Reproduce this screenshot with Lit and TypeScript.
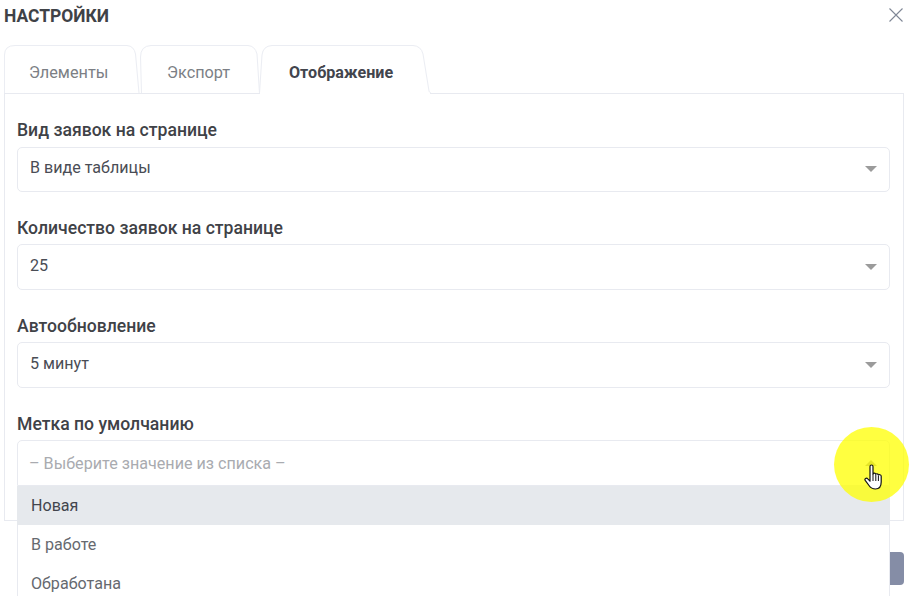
import { LitElement, html, css, svg } from "lit";
import { customElement } from "lit/decorators.js";

const TAB_PATHS = [
  "M0.5 48 V10 Q0.5 0.5 11 0.5 H123 Q130 1 131.5 9 L135 48",
  "M137.5 48 L136.5 12 Q136.5 1 147 0.5 H244 Q251 1 253 9 L255.5 48",
];
const ACTIVE_TAB_PATH = "M255.5 48 L258 10 Q259 1 268 0.5 H409 Q417 1 419 9 L425 46 Q425.3 48 427 48";

@customElement("app-root")
export class AppRoot extends LitElement {
  static styles = css`
    :host { display: block; width: 911px; height: 596px; overflow: hidden; position: relative; background: #fff;
      font-family: Roboto, sans-serif; color: #42454d; }
    .head { display: flex; justify-content: space-between; align-items: center; height: 31px; padding: 0 7px 0 4px; }
    .title { font-size: 17.45px; font-weight: 700; text-transform: uppercase; color: #3f4247; }
    .close { width: 16px; height: 16px; display: block; margin-top: -2px; }
    .tabs { position: relative; display: flex; margin: 14px 0 0 4px; height: 48px; z-index: 2; }
    .shape { position: absolute; left: 0; top: 0; overflow: visible; }
    .tab { position: relative; display: flex; align-items: center; font-size: 16.3px; color: #7c7f85; height: 48px; padding-top: 7px; box-sizing: border-box; }
    .tab.on { color: #42454d; font-weight: 700; font-size: 16.1px; }
    .panel { position: relative; margin: 0 7px 0 4px; height: 428px; border: 1px solid #e8eaf0; box-sizing: border-box; padding: 25px 13px 0 12px; display: flex; flex-direction: column; gap: 25px; background: #fff; }
    .field { display: flex; flex-direction: column; gap: 5px; }
    .field.first { gap: 6px; }
    .label { font-size: 17.6px; font-weight: 500; line-height: 22px; color: #3f4247; height: 22px; }
    .sel { height: 46px; box-sizing: border-box; border: 1px solid #e8eaf0; border-radius: 5px; padding: 0 12px 4px; display: flex; align-items: center; justify-content: space-between; font-size: 16.1px; color: #4a4d55; background: #fff; }
    .first .sel { height: 45px; }
    .sel.ph { color: #a9abb0; border-radius: 5px 5px 0 0; padding-bottom: 0; font-size: 16.15px; }
    .sel.ph span { margin-left: -1px; }
    .arrow { width: 0; height: 0; border-left: 6px solid transparent; border-right: 6px solid transparent; border-top: 6px solid #9b9b9b; margin-top: 3px; }
    .arrow.up { border-top: 0; border-bottom: 6px solid #9b9b9b; margin-top: 0; }
    .foot { display: flex; justify-content: flex-end; margin: 31px 7px 0 0; }
    .btn { width: 40px; height: 33px; background: #858da6; border-radius: 4px; }
    .drop { position: absolute; left: 17px; top: 486px; width: 873px; box-sizing: border-box; background: #fff; border: 1px solid #e8eaf0; border-top: 0; z-index: 5; height: 140px; }
    .opt { height: 39px; display: flex; align-items: center; padding: 0 13px; font-size: 16.1px; color: #66696f; }
    .opt.on { background: #e6e9ed; color: #42454d; margin: 0 -1px; padding: 0 14px; }
    .spot { position: absolute; left: 834px; top: 427px; width: 75px; height: 75px; border-radius: 50%; background: rgba(255, 255, 0, .75); z-index: 6; }
    .cursor { position: absolute; left: 864px; top: 464px; z-index: 7; width: 20px; height: 26px; }
  `;

  private field(label: string, value: string, first = false) {
    return html`<div class="field ${first ? "first" : ""}">
      <div class="label">${label}</div>
      <div class="sel"><span>${value}</span><i class="arrow"></i></div>
    </div>`;
  }

  render() {
    return html`
      <div class="head">
        <div class="title">Настройки</div>
        <svg class="close" viewBox="0 0 16 16"><path d="M1.5 1.5 L14.5 14.5 M14.5 1.5 L1.5 14.5" stroke="#7f8796" stroke-width="1.1" fill="none"/></svg>
      </div>
      <div class="tabs">
        <svg class="shape" width="430" height="49" viewBox="0 0 430 49">
          ${TAB_PATHS.map((d) => svg`<path d=${d} fill="#fff" stroke="#ebedf3"/>`)}
          ${svg`<path d=${ACTIVE_TAB_PATH} fill="#fff" stroke="#ebedf3"/>`}
          ${svg`<rect x="256" y="47.5" width="170" height="2" fill="#fff"/>`}
        </svg>
        <div class="tab" style="padding-left:25px;width:136px">Элементы</div>
        <div class="tab" style="padding-left:27px;width:122px">Экспорт</div>
        <div class="tab on" style="padding-left:27px">Отображение</div>
      </div>
      <div class="panel">
        ${this.field("Вид заявок на странице", "В виде таблицы", true)}
        ${this.field("Количество заявок на странице", "25")}
        ${this.field("Автообновление", "5 минут")}
        <div class="field">
          <div class="label">Метка по умолчанию</div>
          <div class="sel ph"><span>– Выберите значение из списка –</span><i class="arrow up"></i></div>
        </div>
      </div>
      <div class="foot"><div class="btn"></div></div>
      <div class="drop">
        <div class="opt on">Новая</div>
        <div class="opt">В работе</div>
        <div class="opt">Обработана</div>
      </div>
      <div class="spot"></div>
      <svg class="cursor" viewBox="0 0 20 26">
        <path d="M6 2.5 C6 0.5 9 0.5 9 2.5 V10 C9.5 8.8 11.5 8.8 11.8 10.4 C12.2 9.4 14.2 9.6 14.4 11 C15 10.2 17.2 10.6 17.2 12.2 V18 C17.2 22.5 15.5 25 11.5 25 C8 25 6.6 23.8 5 21.5 L1.2 16.4 C0.2 14.8 2.4 13.2 3.8 14.8 L6 17.2 Z" fill="#fff" stroke="#111" stroke-width="1.2" stroke-linejoin="round"/>
        <path d="M9 10 V17 M11.8 11 V17 M14.4 11.5 V17" stroke="#111" stroke-width="1" fill="none"/>
      </svg>
    `;
  }
}
